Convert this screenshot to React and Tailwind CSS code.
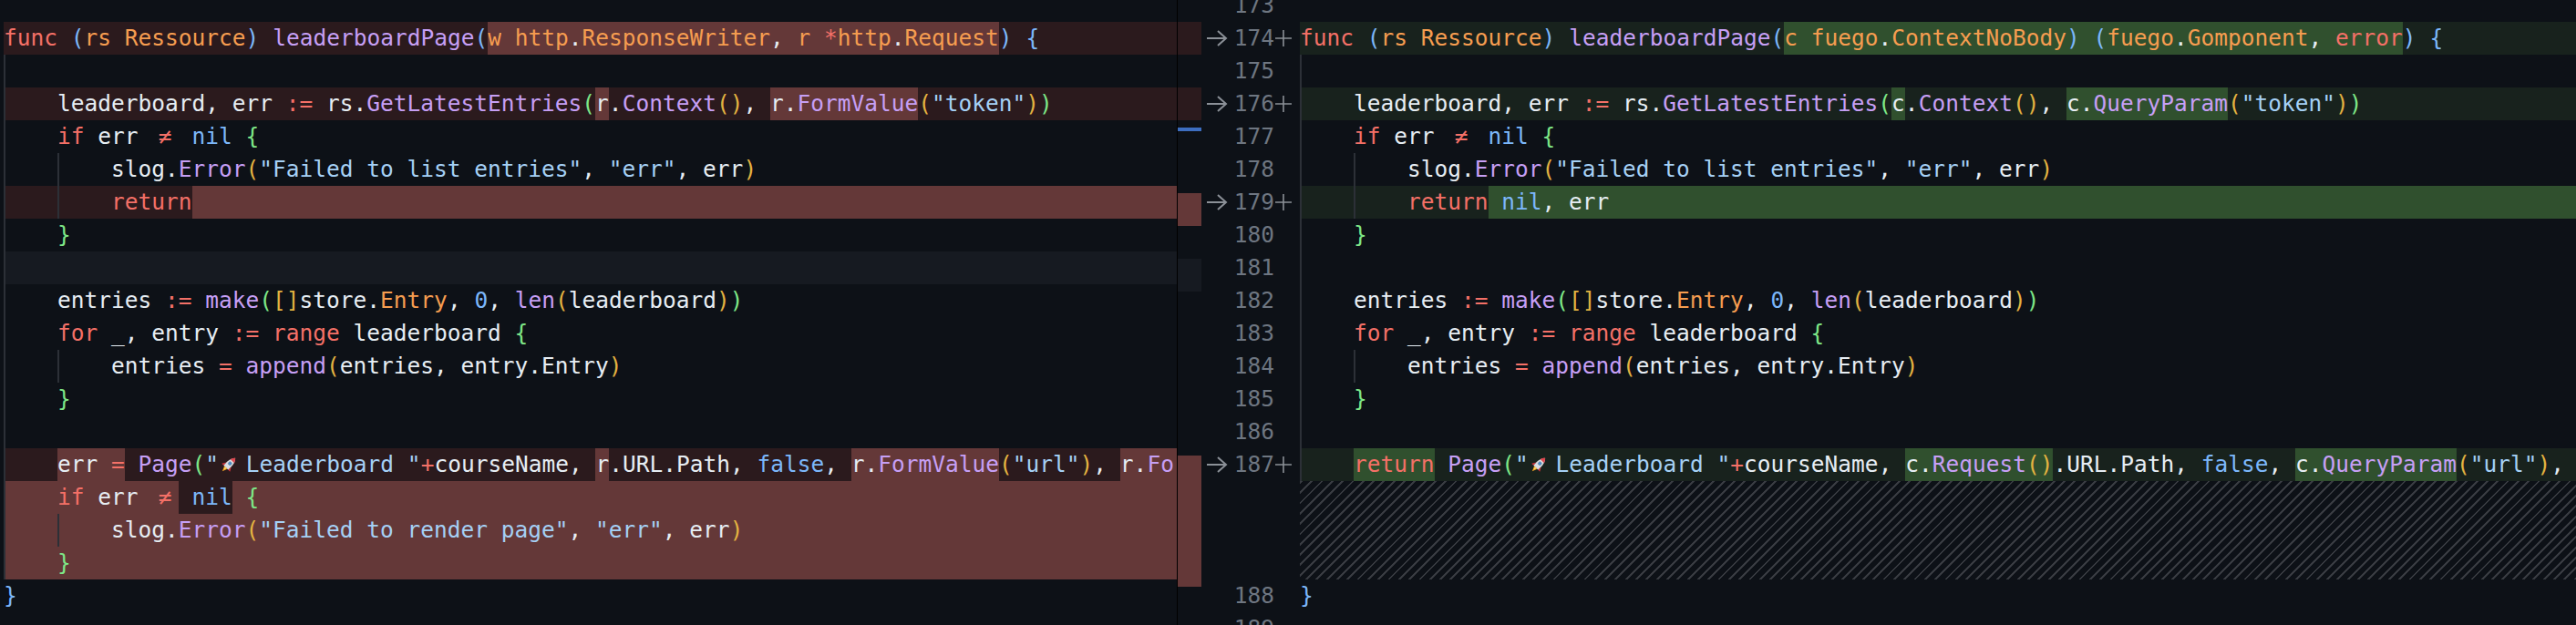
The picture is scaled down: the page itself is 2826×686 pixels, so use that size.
import React from "react";

const COL = {
  k: "text-[#f47067]",
  b: "text-[#7cb7fa]",
  o: "text-[#f69d50]",
  p: "text-[#c69ff5]",
  s: "text-[#a5d0f5]",
  w: "text-[#e6edf3]",
  g: "text-[#7ee787]",
  y: "text-[#e3b341]",
};
const BG = {
  L: { h: "bg-[#643838]", l: "bg-[#2b1a1d]", band: "bg-[#161a21]" },
  R: { h: "bg-[#30502e]", l: "bg-[#18221d]", band: "" },
};

function Rocket() {
  return (
    <svg width="22" height="22" viewBox="0 0 24 24" className="shrink-0 self-center mr-[-7px]">
      <g transform="rotate(45 12 12)">
        <path d="M12 1 C15 4 16 8 16 13 L16 17 L8 17 L8 13 C8 8 9 4 12 1Z" fill="#d8dde3" />
        <path d="M12 1 C13.8 2.8 14.8 4.5 15.3 6 L8.7 6 C9.2 4.5 10.2 2.8 12 1Z" fill="#e0464e" />
        <circle cx="12" cy="10" r="2" fill="#3d8fd6" stroke="#7a8694" strokeWidth="0.8" />
        <path d="M8 12 L5 17 L8 17Z" fill="#d0343c" />
        <path d="M16 12 L19 17 L16 17Z" fill="#d0343c" />
        <path d="M9.5 17 L12 23 L14.5 17Z" fill="#f5a623" />
        <path d="M10.7 17 L12 20.5 L13.3 17Z" fill="#ffe066" />
      </g>
    </svg>
  );
}

function Tok({ t, side }) {
  const [s, c, bg] = t;
  if (s === "🚀") return <Rocket />;
  const bgc = bg ? BG[side][bg] : "";
  if (s === "≠")
    return <span className={`shrink-0 w-[29.5px] text-center ${COL[c]} ${bgc}`}>≠</span>;
  return <span className={`shrink-0 whitespace-pre ${COL[c]} ${bgc}`}>{s}</span>;
}

const slogList = [["slog", "w"], [".", "w"], ["Error", "p"], ["(", "y"], ['"Failed to list entries"', "s"], [", ", "w"], ['"err"', "s"], [", err", "w"], [")", "y"]];
const slogRender = [["slog", "w"], [".", "w"], ["Error", "p"], ["(", "y"], ['"Failed to render page"', "s"], [", ", "w"], ['"err"', "s"], [", err", "w"], [")", "y"]];
const ifErr = [["if", "k"], [" err ", "w"], ["≠", "k"], [" ", "w"], ["nil", "b"], [" ", "w"], ["{", "g"]];
const entries = [["entries ", "w"], [":=", "k"], [" ", "w"], ["make", "p"], ["(", "g"], ["[]", "y"], ["store.", "w"], ["Entry", "o"], [", ", "w"], ["0", "b"], [", ", "w"], ["len", "p"], ["(", "y"], ["leaderboard", "w"], [")", "y"], [")", "g"]];
const forLine = [["for", "k"], [" _, entry ", "w"], [":=", "k"], [" ", "w"], ["range", "k"], [" leaderboard ", "w"], ["{", "g"]];
const appendLine = [["entries ", "w"], ["=", "k"], [" ", "w"], ["append", "p"], ["(", "y"], ["entries, entry.Entry", "w"], [")", "y"]];
const funcHead = [["func", "k"], [" ", "w"], ["(", "b"], ["rs", "o"], [" ", "w"], ["Ressource", "o"], [")", "b"], [" ", "w"], ["leaderboardPage", "p"], ["(", "b"]];

const LEFT = [
  {},
  { fill: "l", strip: "l", toks: [...funcHead, ["w", "o", "h"], [" ", "w", "h"], ["http", "o", "h"], [".", "w", "h"], ["ResponseWriter", "o", "h"], [", ", "w", "h"], ["r", "o", "h"], [" ", "w", "h"], ["*", "k", "h"], ["http", "o", "h"], [".", "w", "h"], ["Request", "o", "h"], [")", "b"], [" ", "w"], ["{", "b"]] },
  { ind: 1, empty: true },
  { ind: 1, fill: "l", strip: "l", toks: [["leaderboard", "w"], [", err ", "w"], [":=", "k"], [" rs.", "w"], ["GetLatestEntries", "p"], ["(", "g"], ["r", "w", "h"], [".", "w"], ["Context", "p"], ["()", "y"], [", ", "w"], ["r", "w", "h"], [".", "w", "h"], ["FormValue", "p", "h"], ["(", "y"], ['"token"', "s"], [")", "y"], [")", "g"]] },
  { ind: 1, toks: ifErr, mark: true },
  { ind: 2, toks: slogList },
  { ind: 2, fill: "l", toks: [["return", "k"]], rest: "h", strip: "h" },
  { ind: 1, toks: [["}", "g"]] },
  { ind: 1, empty: true, fill: "band", strip: "band" },
  { ind: 1, toks: entries },
  { ind: 1, toks: forLine },
  { ind: 2, toks: appendLine },
  { ind: 1, toks: [["}", "g"]] },
  { ind: 1, empty: true },
  { ind: 1, fill: "l", strip: "h", toks: [["err", "w", "h"], [" ", "w", "h"], ["=", "k", "h"], [" ", "w"], ["Page", "p"], ["(", "g"], ['"', "s"], ["🚀"], [' Leaderboard "', "s"], ["+", "k"], ["courseName", "w"], [", ", "w"], ["r", "w", "h"], [".URL.Path, ", "w"], ["false", "b"], [", ", "w"], ["r", "w", "h"], [".", "w", "h"], ["FormValue", "p", "h"], ["(", "y"], ['"url"', "s"], [")", "y"], [", ", "w"], ["r", "w", "h"], [".", "w", "h"], ["FormValue", "p", "h"], ['("courseName"))', "w", "h"]] },
  { ind: 1, fill: "h", strip: "h", toks: [["if", "k"], [" err ", "w"], ["≠", "k"], [" ", "w", "l"], ["nil", "b", "l"], [" ", "w"], ["{", "g"]] },
  { ind: 2, fill: "h", strip: "h", toks: slogRender },
  { ind: 1, fill: "h", strip: "h", toks: [["}", "g"]] },
  { toks: [["}", "b"]] },
  {},
];

const RIGHT = [
  {},
  { fill: "l", toks: [...funcHead, ["c", "o", "h"], [" ", "w", "h"], ["fuego", "o", "h"], [".", "w", "h"], ["ContextNoBody", "o", "h"], [")", "b", "h"], [" ", "w", "h"], ["(", "b", "h"], ["fuego", "o", "h"], [".", "w", "h"], ["Gomponent", "o", "h"], [", ", "w", "h"], ["error", "k", "h"], [")", "b"], [" ", "w"], ["{", "b"]] },
  { ind: 1, empty: true },
  { ind: 1, fill: "l", toks: [["leaderboard", "w"], [", err ", "w"], [":=", "k"], [" rs.", "w"], ["GetLatestEntries", "p"], ["(", "g"], ["c", "w", "h"], [".", "w"], ["Context", "p"], ["()", "y"], [", ", "w"], ["c", "w", "h"], [".", "w", "h"], ["QueryParam", "p", "h"], ["(", "y"], ['"token"', "s"], [")", "y"], [")", "g"]] },
  { ind: 1, toks: ifErr },
  { ind: 2, toks: slogList },
  { ind: 2, fill: "l", toks: [["return", "k"], [" ", "w", "h"], ["nil", "b", "h"], [", err", "w", "h"]], rest: "h" },
  { ind: 1, toks: [["}", "g"]] },
  { ind: 1, empty: true },
  { ind: 1, toks: entries },
  { ind: 1, toks: forLine },
  { ind: 2, toks: appendLine },
  { ind: 1, toks: [["}", "g"]] },
  { ind: 1, empty: true },
  { ind: 1, fill: "l", toks: [["return", "k", "h"], [" ", "w"], ["Page", "p"], ["(", "g"], ['"', "s"], ["🚀"], [' Leaderboard "', "s"], ["+", "k"], ["courseName", "w"], [", ", "w"], ["c", "w", "h"], [".", "w", "h"], ["Request", "p", "h"], ["()", "y", "h"], [".URL.Path, ", "w"], ["false", "b"], [", ", "w"], ["c", "w", "h"], [".", "w", "h"], ["QueryParam", "p", "h"], ["(", "y"], ['"url"', "s"], [")", "y"], [",", "w"]] },
];

function Row({ r, side }) {
  const fill = r.fill ? BG[side][r.fill] : "";
  const inds = [];
  for (let i = 0; i < (r.ind || 0); i++)
    inds.push(<span key={i} className="shrink-0 w-[59px] border-l-2 border-[#2c3037]" />);
  return (
    <div className={`flex h-[36px] leading-[36px] ${fill}`}>
      {inds}
      {(r.toks || []).map((t, i) => (
        <Tok key={i} t={t} side={side} />
      ))}
      {r.rest ? <div className={`flex-1 ${BG[side][r.rest]}`} /> : null}
    </div>
  );
}

function Arrow() {
  return (
    <svg width="26" height="22" viewBox="0 0 26 22" className="shrink-0">
      <path d="M2 11 H23 M14 3 L23 11 L14 19" stroke="#8b9097" strokeWidth="2" fill="none" />
    </svg>
  );
}
function Plus() {
  return (
    <svg width="20" height="20" viewBox="0 0 20 20" className="shrink-0">
      <path d="M10 1 V19 M1 10 H19" stroke="#8b9097" strokeWidth="1.6" />
    </svg>
  );
}

const GUT = [173, 174, 175, 176, 177, 178, 179, 180, 181, 182, 183, 184, 185, 186, 187, null, null, null, 188, 189];
const ARROWS = new Set([1, 3, 6, 14]);

export default function App() {
  return (
    <div className="flex w-[2826px] h-[686px] overflow-hidden bg-[#0d1117] text-[24.5px] font-[family-name:DejaVu_Sans_Mono]">
      <div className="w-[1291px] shrink-0 overflow-hidden pl-[4px]">
        <div className="-mt-[12px]">
          {LEFT.map((r, i) => (
            <Row key={i} r={r} side="L" />
          ))}
        </div>
      </div>
      <div className="w-px shrink-0 bg-[#000000]" />
      <div className="w-[26px] shrink-0 overflow-hidden">
        <div className="-mt-[12px]">
          {LEFT.map((r, i) => (
            <div key={i} className={`h-[36px] ${r.strip ? BG.L[r.strip] : ""}`}>
              {r.mark ? <div className="mt-[8px] h-[4px] bg-[#3d6ec0]" /> : null}
            </div>
          ))}
        </div>
      </div>
      <div className="w-[108px] shrink-0 overflow-hidden">
        <div className="-mt-[12px]">
          {GUT.map((n, i) => (
            <div key={i} className="flex h-[36px] items-center pl-[4px]">
              <div className="w-[26px] shrink-0">{ARROWS.has(i) ? <Arrow /> : null}</div>
              <div className="w-[50px] shrink-0 text-right text-[#6e7681] leading-[36px]">{n ?? ""}</div>
              {ARROWS.has(i) ? <Plus /> : null}
            </div>
          ))}
        </div>
      </div>
      <div className="flex-1 min-w-0 overflow-hidden">
        <div className="-mt-[12px]">
          {RIGHT.map((r, i) => (
            <Row key={i} r={r} side="R" />
          ))}
          <div className="h-[108px] bg-[repeating-linear-gradient(-45deg,#383b41_0px,#383b41_2px,transparent_2px,transparent_8px)]" />
          <Row r={{ toks: [["}", "b"]] }} side="R" />
          <Row r={{}} side="R" />
        </div>
      </div>
    </div>
  );
}
